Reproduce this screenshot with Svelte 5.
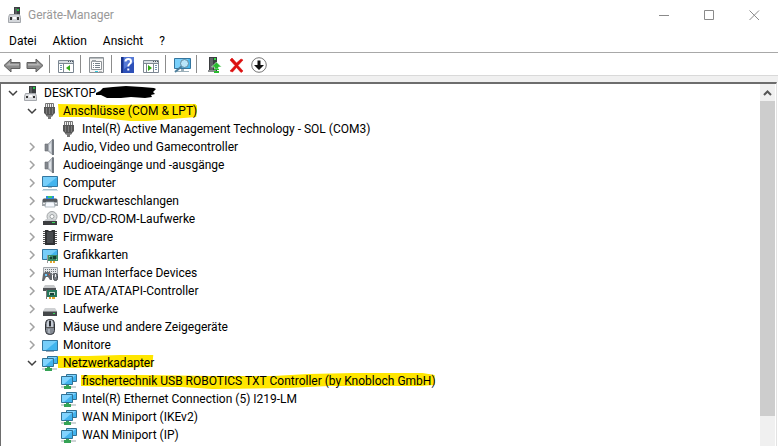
<script>
  let root = $state({
    label: 'DESKTOP-', icon: 'pc', open: true, redacted: true,
    children: [
      {
        label: 'Anschlüsse (COM & LPT)', icon: 'plug', open: true, mark: 'ports',
        children: [{ label: 'Intel(R) Active Management Technology - SOL (COM3)', icon: 'plug' }]
      },
      { label: 'Audio, Video und Gamecontroller', icon: 'speaker', children: [] },
      { label: 'Audioeingänge und -ausgänge', icon: 'speaker', children: [] },
      { label: 'Computer', icon: 'computer', children: [] },
      { label: 'Druckwarteschlangen', icon: 'printer', children: [] },
      { label: 'DVD/CD-ROM-Laufwerke', icon: 'dvd', children: [] },
      { label: 'Firmware', icon: 'chip', children: [] },
      { label: 'Grafikkarten', icon: 'gpu', children: [] },
      { label: 'Human Interface Devices', icon: 'hid', children: [] },
      { label: 'IDE ATA/ATAPI-Controller', icon: 'ide', children: [] },
      { label: 'Laufwerke', icon: 'drive', children: [] },
      { label: 'Mäuse und andere Zeigegeräte', icon: 'mouse', children: [] },
      { label: 'Monitore', icon: 'monitor', children: [] },
      {
        label: 'Netzwerkadapter', icon: 'net', open: true, mark: 'network',
        children: [
          { label: 'fischertechnik USB ROBOTICS TXT Controller (by Knobloch GmbH)', icon: 'net', mark: 'txt' },
          { label: 'Intel(R) Ethernet Connection (5) I219-LM', icon: 'net' },
          { label: 'WAN Miniport (IKEv2)', icon: 'net' },
          { label: 'WAN Miniport (IP)', icon: 'net' }
        ]
      }
    ]
  });

  // Highlighter strokes, drawn in a box as wide as the label plus its overhang
  const marks = {
    ports: { w: 138, d: 'M0 2 L60 3 L95 2 L136 2 L138 4 L137 15 L112 17 L88 19 L72 19 L52 17 L30 15 L1 15 Z' },
    network: { w: 96, d: 'M0 2 L30 2 L62 1 L95 1 L94 13 L60 14 L30 14 L0 14 Z' },
    txt: { w: 351, d: 'M0 3 L60 3 L130 4 L190 4 L225 2 L270 1 L338 1 L350 3 L350 13 L335 14 L280 14 L245 14 L205 16 L130 17 L100 15 L0 14 Z' }
  };
</script>

{#snippet deviceIcon(name)}
  <svg class="device" viewBox="0 0 16 18" aria-hidden="true">
    {#if name === 'pc'}
      <path d="M6 2h7v8H6z" fill="#3c3f42" /><path d="M7 3h2v6H7z" fill="#5b5e61" />
      <path d="M10 3h2v2h-2z" fill="#22c943" />
      <path d="M2.500 9.500h10l1 3v4h-12v-4z" fill="#dcdee1" stroke="#a5a8ad" />
      <path d="M3 12h2v2H3zM10 12h2v2h-2z" fill="#333" /><path d="M6 11h3v2H6z" fill="#fff" />
    {:else if name === 'plug'}
      <path d="M3.500 1.500h8v4h-8z" fill="#f1f1f1" stroke="#777" />
      <path d="M5 2h1v3H5zM7 2h1v3H7zM9 2h1v3H9z" fill="#777" />
      <path d="M2 5h11v6l-2 2H4l-2-2z" fill="#565656" />
      <path d="M4 6h1v6H4zM7 6h1v6H7zM10 6h1v6h-1z" fill="#7c7c7c" />
      <path d="M4 13h7v1l-2 1v2H6v-2l-2-1z" fill="#777" />
    {:else if name === 'speaker'}
      <path d="M3 6h3v7H3z" fill="#83888e" stroke="#656a70" stroke-width=".6" />
      <path d="M6 6l5-5v16l-5-4z" fill="#b9bec5" stroke="#878c92" stroke-width=".6" />
      <path d="M10 1.500h2v15.500h-2z" fill="#737980" /><path d="M7 7l2-2v9l-2-2z" fill="#dfe3e7" />
    {:else if name === 'computer' || name === 'monitor'}
      <g transform={name === 'monitor' ? 'translate(0 2)' : undefined}>
        <path d="M.5 2.500h15v10H.5z" fill="#42b4ee" stroke="#34769f" />
        <path d="M1 3h14L4 12H1z" fill="#76cefa" />
        {#if name === 'computer'}
          <path d="M6 13h4v1H6zM1 15h14v1H1z" fill="#a6bfcc" /><path d="M0 16h16v1H0z" fill="#d2e1e8" />
        {:else}
          <path d="M4 13h8v1H4z" fill="#9ab" />
        {/if}
      </g>
    {:else if name === 'printer'}
      <path d="M4 4h8v4H4z" fill="#2b8de0" /><path d="M6 4h4v2H6z" fill="#3fcc67" />
      <path d="M2 6h2v2h8V6h2l2 2v6H0V8z" fill="#a1a6aa" /><path d="M1 7h14v3H1z" fill="#55595d" />
      <path d="M1 11h2v1H1zM13 11h2v1h-2z" fill="#e8e8e8" /><path d="M4 10h8l1 5H3z" fill="#f7faff" stroke="#9aa5ac" stroke-width=".7" />
    {:else if name === 'dvd'}
      <circle cx="10" cy="6.500" r="5" fill="#d9dcdd" stroke="#a3a6a8" />
      <circle cx="10" cy="6.500" r="2" fill="#fff" stroke="#9da1a3" />
      <path d="M4 9h9l2 3H1z" fill="#c9cccf" /><path d="M1 11h14v4H1z" fill="#3c3e40" />
      <path d="M10 12h3v1h-3z" fill="#36dd5a" />
    {:else if name === 'chip'}
      <path d="M1 3.500h14M1 5.500h14M1 7.500h14M1 9.500h14M1 11.500h14M1 13.500h14M1 15.500h14" stroke="#555" fill="none" />
      <path d="M3 2h3l1 1h2l1-1h3v15H3z" fill="#303234" /><path d="M5 4h6v11H5z" fill="#484b4e" />
    {:else if name === 'gpu'}
      <path d="M.5 3.500h15v10H.5z" fill="#42b4ee" stroke="#34769f" /><path d="M1 4h14L4 13H1z" fill="#76cefa" />
      <path d="M5 9h1v8H5z" fill="#999" /><path d="M6 9h10v6H6z" fill="#3c8a66" />
      <path d="M8 11h2v2H8zM11 10h3v3h-3z" fill="#173f36" /><path d="M7 10h1v1H7zM14 13h1v1h-1z" fill="#8be0aa" />
      <path d="M8 15h2v2H8zM11 15h2v2h-2z" fill="#e2a72e" />
    {:else if name === 'hid'}
      <path d="M1.500 3.500h14v7h-14z" fill="#e4e7ea" stroke="#a0a5aa" />
      <path d="M3 5.500h11M3 7.500h11M3 9.500h11" stroke="#71777c" stroke-dasharray="1 1" />
      <path d="M1 10l2-2h5l2 3v5H8l-2-3H4l-2 4H0z" fill="#63686d" />
      <path d="M3 10h2v2H3z" fill="#69c8ff" /><path d="M7 10h1v1H7z" fill="#f34b38" />
      <rect x="11.500" y="9.500" width="4" height="7" rx="2" fill="#747a80" stroke="#42484d" /><path d="M13 10h1v3h-1z" fill="#e6e9eb" />
    {:else if name === 'ide'}
      <path d="M3 3h9l2 3H1z" fill="#c6c8ca" /><path d="M1 6h13v3H1z" fill="#505356" />
      <path d="M4 8h1v9H4z" fill="#777" /><path d="M5 8h10v7H5z" fill="#26755a" />
      <path d="M7 10h6v3H7z" fill="#bad4c5" /><path d="M8 11h4v2H8z" fill="#193f36" />
      <path d="M7 15h2v2H7zM10 15h3v2h-3z" fill="#e2a72e" />
    {:else if name === 'drive'}
      <path d="M3 8h10l2 3H1z" fill="#cfd1d3" /><path d="M1 11h14v5H1z" fill="#45484a" />
      <path d="M1 11h14v1H1z" fill="#8c8f91" /><path d="M11 13h2v1h-2z" fill="#36dd5a" />
    {:else if name === 'mouse'}
      <rect x="3.500" y="1.500" width="9" height="15" rx="4" fill="#858b94" stroke="#303338" />
      <path d="M5 4q1-2 2-2v7H5zM9 2q2 0 2 3v4H9z" fill="#c5cbd4" />
      <path d="M4 9.500h8" stroke="#555" /><path d="M7 3h2v5H7z" fill="#292c30" /><path d="M6 11h2v4H6z" fill="#a8afb8" />
    {:else if name === 'net'}
      <path d="M5.500 2.500h10v7h-10z" fill="#43b4ef" stroke="#327295" /><path d="M6 3h9l-7 6H6z" fill="#81d4ff" />
      <path d="M.5 4.500h11v8H.5z" fill="#43b4ef" stroke="#327295" /><path d="M1 5h10l-8 7H1z" fill="#81d4ff" />
      <path d="M0 14h15v2H0z" fill="#cfd4d6" /><path d="M5 13h3v1h2v3H3v-3h2z" fill="#35a355" />
    {/if}
  </svg>
{/snippet}

{#snippet branch(node)}
  <li>
    <div class="row">
      {#if node.children}
        <button class="expander" class:open={node.open} aria-label={node.label} aria-expanded={!!node.open} onclick={() => (node.open = !node.open)}>
          <svg width="10" height="10" viewBox="0 0 10 10"><path d={node.open ? 'M1 3l4 4 4-4' : 'M3 1l4 4-4 4'} /></svg>
        </button>
      {:else}
        <span class="expander"></span>
      {/if}
      {@render deviceIcon(node.icon)}
      <span class="label">
        {#if node.mark}
          <svg class="mark" viewBox="0 0 {marks[node.mark].w} 19" preserveAspectRatio="none" class:tight={node.mark === 'txt'} aria-hidden="true"><path d={marks[node.mark].d} /></svg>
        {/if}
        <span class="text">{node.label}</span>
        {#if node.redacted}
          <svg class="scribble" width="60" height="14" viewBox="0 0 60 14" aria-hidden="true"><path d="M0 7l4-2 3-3 10-1 13-1 16 1 12 1 2 1-3 3 2 2-4 1 1 2-7 1-14-1-10 1-14 0-6-3-5 0z" /></svg>
        {/if}
      </span>
    </div>
    {#if node.open && node.children.length}
      <ul>
        {#each node.children as child}{@render branch(child)}{/each}
      </ul>
    {/if}
  </li>
{/snippet}

{#snippet arrow()}
  <path d="M1 11.500L8 5v3.500h9v6H8V18z" fill="#8b8b8b" stroke="#5f5f5f" /><path d="M3 11.500L7 8v2h9v1.500z" fill="#b5b5b5" />
{/snippet}

{#snippet paneWindow()}
  <path d="M1.500 6.500h15v12h-15z" fill="#fff" stroke="#7c8792" /><path d="M2 7h14v2H2z" fill="#d7dde3" />
  <path d="M2 9.500h14" stroke="#7c8792" /><path d="M11 7h1v1h-1zM13 7h1v1h-1zM15 7h1v1h-1z" fill="#49545e" />
{/snippet}

<div class="window">
  <header>
    <svg class="app-icon" viewBox="0 0 14 18" aria-hidden="true">
      <path d="M6 1h6v8H6z" fill="#3c3f42" /><path d="M7 2h2v6H7z" fill="#5b5e61" /><path d="M9 3h2v2H9z" fill="#22c943" />
      <path d="M1.500 8.500h10l1 3v5h-12v-5z" fill="#d3d6da" stroke="#a5a8ad" />
      <path d="M2 11h2v3H2zM9 11h2v3H9z" fill="#333" /><path d="M5 11h3v2H5z" fill="#fff" />
    </svg>
    <h1>Geräte-Manager</h1>
    <div class="controls">
      <button aria-label="Minimieren"><svg width="11" height="11" viewBox="0 0 11 11"><path d="M0 5.500h10" /></svg></button>
      <button aria-label="Maximieren"><svg width="11" height="11" viewBox="0 0 11 11"><path d="M.5 .5h9v9h-9z" /></svg></button>
      <button aria-label="Schließen"><svg width="11" height="11" viewBox="0 0 11 11"><path d="M.5 .5l9.500 9.500M10 .5L.5 10" /></svg></button>
    </div>
  </header>

  <nav>
    <button>Datei</button>
    <button>Aktion</button>
    <button>Ansicht</button>
    <button>?</button>
  </nav>

  <div class="toolbar" role="toolbar" aria-label="Werkzeuge">
    <button aria-label="Zurück"><svg viewBox="0 0 19 20">{@render arrow()}</svg></button>
    <button aria-label="Vorwärts"><svg viewBox="0 0 19 20"><g transform="matrix(-1 0 0 1 18 0)">{@render arrow()}</g></svg></button>
    <i class="sep"></i>
    <button aria-label="Konsolenstruktur">
      <svg viewBox="0 0 19 20">
        {@render paneWindow()}
        <path d="M6.500 10v8" stroke="#7c8792" /><path d="M3 11.500h2M3 13.500h2M3 15.500h2" stroke="#6e91b5" />
        <path d="M13 11v6l-4-3z" fill="#31a817" />
      </svg>
    </button>
    <i class="sep"></i>
    <button aria-label="Eigenschaften">
      <svg viewBox="0 0 19 20">
        <path d="M1.500 3.500h14v15h-14z" fill="#f4f4f4" stroke="#8d9296" /><path d="M2 4h13v1H2z" fill="#b8bdc0" />
        <path d="M3.500 7.500h10v8h-10z" fill="#fff" stroke="#8d9296" /><path d="M4 6h4v2H4z" fill="#9ea4a8" />
        <path d="M5 9.500h1M7 9.500h5M5 11.500h1M7 11.500h5M5 13.500h1M7 13.500h5" stroke="#75818a" />
        <path d="M7 17h3v1H7z" fill="#31c6dc" /><path d="M11 17h3v1h-3z" fill="#bbb" />
      </svg>
    </button>
    <i class="sep"></i>
    <button aria-label="Hilfe">
      <svg viewBox="0 0 19 20">
        <path d="M2 3h13v16H2z" fill="#2d50b8" /><path d="M2 3h2v16H2z" fill="#1a348a" /><path d="M5 3h10v5L5 15z" fill="#5679d5" />
        <path d="M6.500 7.500Q6.500 5 9.300 5q2.700 0 2.700 2.400 0 1.600-1.500 2.600-1.200.8-1.200 2.500M9.300 14.500v2" fill="none" stroke="#fff" stroke-width="2" />
      </svg>
    </button>
    <button aria-label="Aktionsbereich">
      <svg viewBox="0 0 19 20">
        {@render paneWindow()}
        <path d="M11.500 10v8M4.500 10v8" stroke="#7c8792" /><path d="M13 11.500h2M13 13.500h2M13 15.500h2" stroke="#6e91b5" />
        <path d="M6 11v6l4-3z" fill="#31a817" />
      </svg>
    </button>
    <i class="sep"></i>
    <button aria-label="Nach geänderter Hardware suchen">
      <svg viewBox="0 0 19 20">
        <path d="M1.500 4.500h16v10h-16z" fill="#48b7ed" stroke="#34769f" /><path d="M2 5h14L6 14H2z" fill="#79d0fb" />
        <path d="M8 15h3v2H8zM4 17h12v1H4z" fill="#9cb0ba" />
        <circle cx="11.500" cy="9.500" r="4" fill="#b9e5f9" stroke="#64899f" /><path d="M8.500 12.500L2 18" stroke="#4c7e9c" stroke-width="2" />
      </svg>
    </button>
    <i class="sep"></i>
    <button aria-label="Treiber aktualisieren">
      <svg viewBox="0 0 19 20">
        <path d="M5 3h8v14H5z" fill="#3b3e40" /><path d="M6 4h3v12H6z" fill="#626568" /><path d="M10 4h2v2h-2z" fill="#31db43" />
        <path d="M4 16h8v2H4z" fill="#8b8e90" />
        <path d="M12.500 8l5 5h-3v2h-4v-2h-3z" fill="#2abb2f" stroke="#fff" stroke-width=".5" /><path d="M10 15h5v1h-5zM10 17h5v2h-5z" fill="#2abb2f" />
      </svg>
    </button>
    <button aria-label="Gerät deinstallieren">
      <svg viewBox="0 0 19 20"><path d="M3 6l2-2 4.500 5L14 5l2 1-5 5.500 5 5.500-2 1.500-4.500-5-4 4.500L3 17l5-5.500z" fill="#dc1010" stroke="#dc1010" stroke-width=".6" /></svg>
    </button>
    <button aria-label="Gerät deaktivieren">
      <svg viewBox="0 0 19 20"><circle cx="9" cy="11" r="7.300" fill="#fff" stroke="#777" /><path d="M7.500 6.500h3V11H14l-5 5-5-5h3.500z" fill="#111" /></svg>
    </button>
  </div>

  <main>
    <ul class="tree">{@render branch(root)}</ul>
    <div class="scrollbar">
      <button aria-label="Nach oben"><svg width="9" height="6" viewBox="0 0 9 6"><path d="M1 5l3.500-3.500L8 5" /></svg></button>
      <div class="thumb"></div>
    </div>
  </main>
</div>

<style>
  :global(body) { margin: 0; }
  .window {
    box-sizing: border-box;
    height: 100vh;
    display: flex;
    flex-direction: column;
    overflow: hidden;
    background: #fff;
    color: #000;
    font: 12px/18px "Segoe UI", Roboto, "Open Sans", sans-serif;
  }
  button {
    display: flex;
    align-items: center;
    justify-content: center;
    margin: 0;
    padding: 0;
    border: 0;
    background: none;
    color: inherit;
    font: inherit;
  }
  svg { display: block; flex: none; }
  header { display: flex; align-items: center; height: 30px; padding: 0 1px 0 8px; }
  .app-icon { width: 14px; height: 18px; }
  h1 { flex: 1; margin: 0 0 0 6px; font: inherit; color: #999; }
  .controls { display: flex; }
  .controls button { width: 45px; height: 30px; }
  .controls path { fill: none; stroke: #8a8a8a; }
  nav { display: flex; gap: 16px; height: 22px; padding-left: 9px; }
  .toolbar {
    display: flex;
    align-items: center;
    height: 22px;
    padding-left: 1px;
    border-top: 1px solid #a8a8a8;
    border-bottom: 1px solid #d9d9d9;
  }
  .toolbar button { width: 23px; height: 22px; }
  .toolbar svg { width: 19px; height: 20px; }
  .sep { width: 1px; height: 18px; margin: 0 5px 0 2px; background: #8c8c8c; }
  main {
    flex: 1;
    min-height: 0;
    display: flex;
    border-top: 6px solid #f0f0f0;
    padding-right: 1px;
  }
  ul { list-style: none; margin: 0; padding: 0 0 0 19px; }
  .tree {
    flex: 1;
    overflow: hidden;
    padding-left: 1px;
    border-top: 2px solid #6d6d6d;
    border-left: 1px solid #6d6d6d;
  }
  .row { display: flex; align-items: center; height: 18px; white-space: nowrap; }
  .expander { box-sizing: border-box; flex: none; width: 20px; height: 18px; padding-left: 1px; margin-right: 1px; }
  .expander path { fill: none; stroke: #a2a2a2; stroke-width: 1.5; }
  .expander.open path { stroke: #404040; }
  .device { width: 16px; height: 18px; }
  .label { position: relative; display: flex; align-items: center; margin-left: 5px; }
  .text { position: relative; }
  .mark { position: absolute; left: -5px; top: 0; width: calc(100% + 5px); height: 19px; }
  .mark.tight { left: -1px; width: calc(100% + 1px); }
  .mark path { fill: #ffe600; }
  .scribble { margin-left: -4px; }
  .scrollbar {
    width: 15px;
    display: flex;
    flex-direction: column;
    padding-right: 1px;
    border-top: 2px solid #6d6d6d;
    border-right: 1px solid #e3e3e3;
    background: #f0f0f0;
    background-clip: content-box;
  }
  .scrollbar button { height: 17px; }
  .scrollbar button path { fill: none; stroke: #555; stroke-width: 2; }
  .thumb { height: 87%; background: #cdcdcd; }
</style>
